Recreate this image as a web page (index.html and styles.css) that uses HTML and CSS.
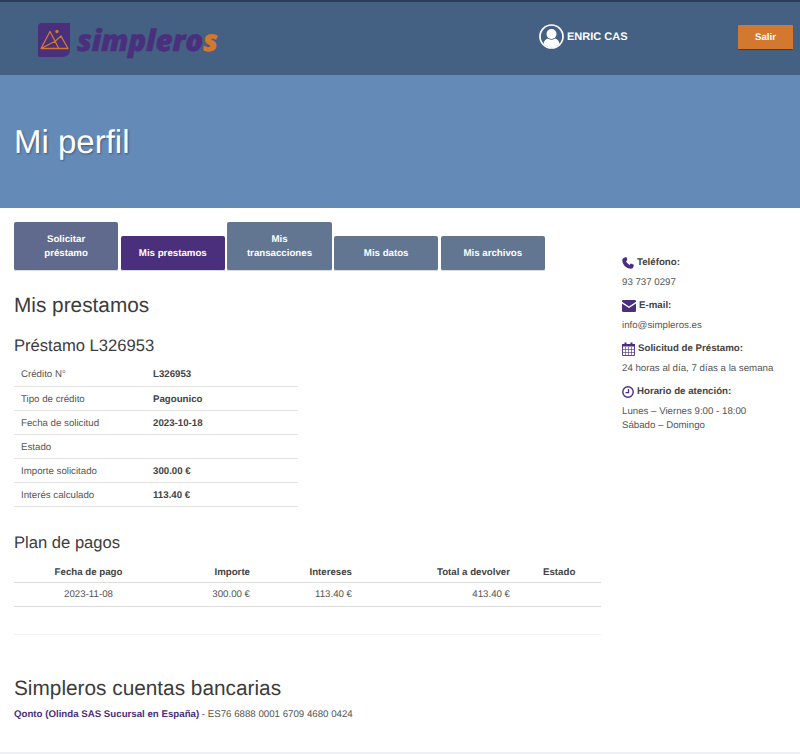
FILE: index.html
```html
<!DOCTYPE html>
<html lang="es">
<head>
<meta charset="utf-8">
<title>Mi perfil</title>
<link rel="stylesheet" href="styles.css">
</head>
<body>
<header class="topbar">
  <a class="logo">
    <svg class="logo-mark" viewBox="0 0 32 34" width="32" height="34">
      <path d="M4 0H32V26Q32 34 24 34H2Q0 34 0 32V4Q0 0 4 0Z" fill="#4a2f7d"/>
      <path d="M3 25.5L12 8.5L20.5 25M17.5 18L23 13L30 25.5H3Z" fill="none" stroke="#d2782f" stroke-width="1.3" stroke-linejoin="round"/>
      <circle cx="19" cy="8.5" r="1.7" fill="#d2782f"/>
    </svg>
    <span class="logo-text">simplero<span class="logo-s">s</span></span>
  </a>
  <div class="user">
    <svg class="user-icon" viewBox="0 0 25 25" width="25" height="25">
      <circle cx="12.5" cy="12.5" r="11.5" fill="none" stroke="#fff" stroke-width="1.7"/>
      <circle cx="12.5" cy="10" r="5" fill="#fff"/>
      <path d="M4.5 20Q5 15.5 9 14.5Q12.5 17 16 14.5Q20 15.5 20.5 20Q12.5 27 4.5 20Z" fill="#fff"/>
    </svg>
    <span>ENRIC CAS</span>
  </div>
  <a class="logout">Salir</a>
</header>
<section class="hero"><h1>Mi perfil</h1></section>
<div class="layout">
  <main class="content">
    <nav class="tabs">
      <a class="tab tall tab-first">Solicitar<br>préstamo</a>
      <a class="tab active">Mis prestamos</a>
      <a class="tab tall">Mis<br>transacciones</a>
      <a class="tab">Mis datos</a>
      <a class="tab">Mis archivos</a>
    </nav>
    <h2 class="page-title">Mis prestamos</h2>
    <h3 class="loan-title">Préstamo L326953</h3>
    <table class="details">
      <tr><td>Crédito N°</td><th>L326953</th></tr>
      <tr><td>Tipo de crédito</td><th>Pagounico</th></tr>
      <tr><td>Fecha de solicitud</td><th>2023-10-18</th></tr>
      <tr><td>Estado</td><th></th></tr>
      <tr><td>Importe solicitado</td><th>300.00 €</th></tr>
      <tr><td>Interés calculado</td><th>113.40 €</th></tr>
    </table>
    <h3 class="plan-title">Plan de pagos</h3>
    <table class="plan">
      <thead>
        <tr><th class="c1">Fecha de pago</th><th class="c2">Importe</th><th class="c3">Intereses</th><th class="c4">Total a devolver</th><th class="c5">Estado</th></tr>
      </thead>
      <tbody>
        <tr><td class="c1">2023-11-08</td><td class="c2">300.00 €</td><td class="c3">113.40 €</td><td class="c4">413.40 €</td><td class="c5"></td></tr>
      </tbody>
    </table>
    <hr class="divider">
    <h2 class="bank-title">Simpleros cuentas bancarias</h2>
    <p class="bank"><strong>Qonto (Olinda SAS Sucursal en España)</strong> - ES76 6888 0001 6709 4680 0424</p>
  </main>
  <aside class="side">
    <h4>
      <svg class="ico" viewBox="0 0 12 12" width="12" height="12"><path d="M2.6 .4L4.4 .1 5.4 3 4 4.2Q5 6.6 7.6 8L8.9 6.6 11.8 7.7 11.5 9.7Q11 11.8 9 11.8 5 11.5 2.6 9 .2 6.5 .2 3 .4 1 2.6 .4Z" fill="#4a2f7d"/></svg>
      Teléfono:
    </h4>
    <p>93 737 0297</p>
    <h4>
      <svg class="ico" viewBox="0 0 14 12" width="14" height="12"><path d="M0 1.2Q0 0 1.2 0H12.8Q14 0 14 1.2V1.8L7 6.4 0 1.8Z M0 3.4L7 8 14 3.4V10.8Q14 12 12.8 12H1.2Q0 12 0 10.8Z" fill="#4a2f7d"/></svg>
      E-mail:
    </h4>
    <p>info@simpleros.es</p>
    <h4>
      <svg class="ico" viewBox="0 0 13 14" width="13" height="14"><path d="M.5 2.5H12.5V13.5H.5Z" fill="none" stroke="#4a2f7d" stroke-width=".9"/><path d="M0 2H13V4.6H0Z M2.5 .5H4.5V3H2.5Z M8.5 .5H10.5V3H8.5Z" fill="#4a2f7d"/><path d="M3.5 5V13M6.5 5V13M9.5 5V13M1 7.5H12M1 10.5H12" stroke="#4a2f7d" stroke-width=".6"/></svg>
      Solicitud de Préstamo:
    </h4>
    <p>24 horas al día, 7 días a la semana</p>
    <h4>
      <svg class="ico" viewBox="0 0 12 12" width="12" height="12"><circle cx="6" cy="6" r="5.2" fill="none" stroke="#4a2f7d" stroke-width="1.4"/><path d="M6.5 3V6.6H3.5" fill="none" stroke="#4a2f7d" stroke-width="1.3"/></svg>
      Horario de atención:
    </h4>
    <p>Lunes – Viernes 9:00 - 18:00<br>Sábado – Domingo</p>
  </aside>
</div>
<div class="footer-line"></div>
</body>
</html>
```
FILE: styles.css
```css
* { box-sizing: border-box; }
html, body { margin: 0; padding: 0; }
body {
  font-family: "Liberation Sans", Arial, sans-serif;
  font-size: 9.7px;
  line-height: 14px;
  color: #444;
  background: #fff;
  height: 754px;
  overflow: hidden;
  text-rendering: geometricPrecision;
}
.topbar {
  height: 75px;
  background: #446083;
  border-top: 2px solid #2b3d5b;
  display: flex;
  align-items: flex-start;
  position: relative;
}
.logo {
  display: flex;
  align-items: center;
  margin: 21px 0 0 38px;
  gap: 7px;
  width: 500px;
}
.logo-mark { display: block; }
.logo-text {
  font-family: "Open Sans", sans-serif;
  font-weight: 800;
  font-style: italic;
  font-size: 29.6px;
  line-height: 34px;
  color: #4a2f7d;
  -webkit-text-stroke: .5px #4a2f7d;
  letter-spacing: -.2px;
}
.logo-s { color: #d2782f; -webkit-text-stroke-color: #d2782f; }
.user {
  display: flex;
  align-items: center;
  gap: 3px;
  margin: 22px 0 0 1px;
  width: 199px;
  font-size: 11px;
  font-weight: bold;
  color: #fff;
}
.user-icon { display: block; }
.logout {
  margin-top: 23px;
  width: 55px;
  height: 25px;
  background: #d2782f;
  border-bottom: 1px solid #4a2f7d;
  border-radius: 1px;
  color: #fff;
  font-weight: bold;
  text-align: center;
  line-height: 25px;
}
.hero {
  height: 133px;
  background: #648ab8;
  padding: 47px 14px 0;
}
.hero h1 {
  margin: 0;
  font-size: 33px;
  line-height: 40px;
  font-weight: normal;
  color: #fff;
  text-shadow: 1px 1px 2px rgba(0,0,0,.35);
}
.layout { display: flex; }
.content { width: 622px; padding: 14px 21px 0 14px; }
.tabs { display: flex; align-items: flex-end; gap: 2.5px; }
.tab {
  width: 104.2px;
  height: 35px;
  background: #627692;
  border-bottom: 1px solid #d8dce6;
  border-radius: 2px;
  color: #fff;
  font-weight: bold;
  text-align: center;
  padding-top: 11px;
}
.tab.tall { height: 49px; padding-top: 11px; }
.tab-first { background: #5f6a8d; }
.tab.active { background: #4a2f7d; }
.page-title {
  margin: 23px 0 0;
  font-size: 20.8px;
  line-height: 24px;
  font-weight: normal;
  color: #3c3c3c;
}
.loan-title {
  margin: 18px 0 0;
  font-size: 16.6px;
  line-height: 20px;
  font-weight: normal;
  color: #3c3c3c;
}
.details {
  margin-top: 6px;
  width: 284px;
  border-collapse: collapse;
}
.details td, .details th {
  height: 24px;
  padding: 3px 7px 0;
  border-bottom: 1px solid #e3e3e3;
  text-align: left;
  font-weight: normal;
}
.details td { width: 132px; color: #555; }
.details th { font-weight: bold; }
.plan-title {
  margin: 26px 0 0;
  font-size: 16.6px;
  line-height: 20px;
  font-weight: normal;
  color: #3c3c3c;
}
.plan {
  margin-top: 7px;
  width: 587px;
  border-collapse: collapse;
  table-layout: fixed;
}
.plan th, .plan td {
  height: 24px;
  padding: 0;
  border-bottom: 1px solid #ddd;
}
.plan th { height: 23px; padding-top: 4px; font-weight: bold; }
.plan td { color: #555; }
.c1 { width: 149px; text-align: center; }
.c2 { width: 87px; text-align: right; }
.c3 { width: 102px; text-align: right; }
.c4 { width: 158px; text-align: right; }
.c5 { text-align: left; padding-left: 33px !important; }
.divider {
  margin: 27px 0 0;
  border: 0;
  border-top: 1px solid #f3f3f3;
}
.bank-title {
  margin: 42px 0 0;
  font-size: 20.8px;
  line-height: 24px;
  font-weight: normal;
  color: #3c3c3c;
}
.bank { margin: 7px 0 0; color: #555; }
.bank strong { color: #4a2f7d; }
.side { padding: 45px 0 0; width: 178px; }
.side h4 {
  margin: 0;
  display: flex;
  align-items: center;
  gap: 3px;
  height: 20px;
  font-size: 9.7px;
  font-weight: bold;
}
.side p { margin: 3px 0 6px; color: #555; }
.ico { display: block; flex: none; }
.footer-line {
  position: absolute;
  left: 0; right: 0; top: 752px;
  height: 2px;
  background: #eef0f3;
}
```
